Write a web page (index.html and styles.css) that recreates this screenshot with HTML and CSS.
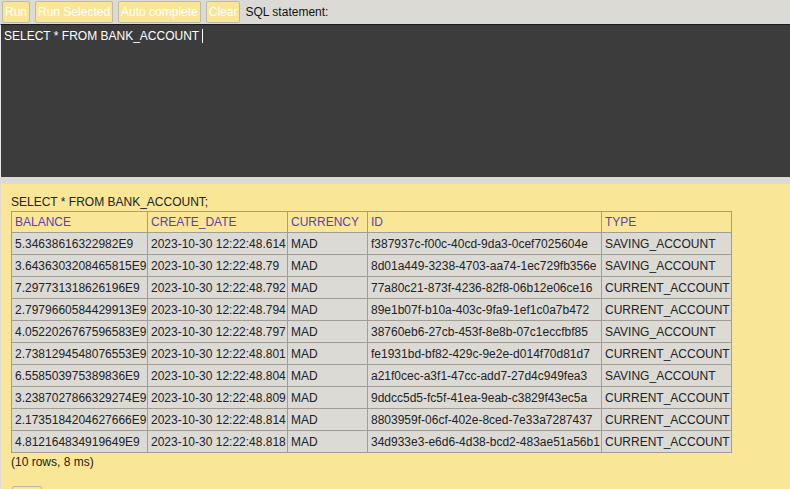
FILE: index.html
```html
<!DOCTYPE html>
<html>
<head>
<meta charset="utf-8">
<link rel="stylesheet" href="styles.css">
</head>
<body>
<div class="toolbar">
  <button class="btn">Run</button>
  <button class="btn">Run Selected</button>
  <button class="btn">Auto complete</button>
  <button class="btn">Clear</button>
  <span class="label">SQL statement:</span>
</div>
<div class="editor"><span class="code">SELECT * FROM BANK_ACCOUNT</span><span class="caret"></span></div>
<div class="gap"></div>
<div class="result">
  <div class="query">SELECT * FROM BANK_ACCOUNT;</div>
  <table class="grid">
    <colgroup><col class="c1"><col class="c2"><col class="c3"><col class="c4"><col class="c5"></colgroup>
    <tr class="head"><th>BALANCE</th><th>CREATE_DATE</th><th>CURRENCY</th><th>ID</th><th>TYPE</th></tr>
    <tr><td>5.34638616322982E9</td><td>2023-10-30 12:22:48.614</td><td>MAD</td><td>f387937c-f00c-40cd-9da3-0cef7025604e</td><td>SAVING_ACCOUNT</td></tr>
    <tr><td>3.6436303208465815E9</td><td>2023-10-30 12:22:48.79</td><td>MAD</td><td>8d01a449-3238-4703-aa74-1ec729fb356e</td><td>SAVING_ACCOUNT</td></tr>
    <tr><td>7.297731318626196E9</td><td>2023-10-30 12:22:48.792</td><td>MAD</td><td>77a80c21-873f-4236-82f8-06b12e06ce16</td><td>CURRENT_ACCOUNT</td></tr>
    <tr><td>2.7979660584429913E9</td><td>2023-10-30 12:22:48.794</td><td>MAD</td><td>89e1b07f-b10a-403c-9fa9-1ef1c0a7b472</td><td>CURRENT_ACCOUNT</td></tr>
    <tr><td>4.0522026767596583E9</td><td>2023-10-30 12:22:48.797</td><td>MAD</td><td>38760eb6-27cb-453f-8e8b-07c1eccfbf85</td><td>SAVING_ACCOUNT</td></tr>
    <tr><td>2.7381294548076553E9</td><td>2023-10-30 12:22:48.801</td><td>MAD</td><td>fe1931bd-bf82-429c-9e2e-d014f70d81d7</td><td>CURRENT_ACCOUNT</td></tr>
    <tr><td>6.558503975389836E9</td><td>2023-10-30 12:22:48.804</td><td>MAD</td><td>a21f0cec-a3f1-47cc-add7-27d4c949fea3</td><td>SAVING_ACCOUNT</td></tr>
    <tr><td>3.2387027866329274E9</td><td>2023-10-30 12:22:48.809</td><td>MAD</td><td>9ddcc5d5-fc5f-41ea-9eab-c3829f43ec5a</td><td>CURRENT_ACCOUNT</td></tr>
    <tr><td>2.1735184204627666E9</td><td>2023-10-30 12:22:48.814</td><td>MAD</td><td>8803959f-06cf-402e-8ced-7e33a7287437</td><td>CURRENT_ACCOUNT</td></tr>
    <tr><td>4.812164834919649E9</td><td>2023-10-30 12:22:48.818</td><td>MAD</td><td>34d933e3-e6d6-4d38-bcd2-483ae51a56b1</td><td>CURRENT_ACCOUNT</td></tr>
  </table>
  <div class="summary">(10 rows, 8 ms)</div>
  <div class="edit-btn"></div>
</div>
</body>
</html>
```

FILE: styles.css
```css
html, body {
  margin: 0;
  padding: 0;
  background: #dcdad5;
  font-family: "Liberation Sans", Arial, sans-serif;
  font-size: 12px;
  overflow: hidden;
  height: 489px;
}
body {
  display: flex;
  flex-direction: column;
}
.toolbar {
  display: flex;
  align-items: center;
  gap: 5px;
  padding: 1px 2px 1px 2px;
  height: 22px;
  flex: none;
}
.btn {
  font-family: "Liberation Sans", Arial, sans-serif;
  font-size: 12px;
  color: #ffffff;
  background: #f8e596;
  border: 1px solid #bdb9ad;
  border-radius: 2px;
  height: 22px;
  padding: 0 2px;
  margin: 0;
}
.label {
  color: #111;
  margin-left: 0;
}
.editor {
  flex: none;
  background: #3c3c3c;
  border-top: 1px solid #1a1a1a;
  border-left: 1px solid #e8e8e8;
  color: #ffffff;
  padding: 4px 3px;
  display: flex;
  align-items: flex-start;
  box-sizing: border-box;
  height: 153px;
}
.code {
  line-height: 14px;
}
.caret {
  display: inline-block;
  width: 1px;
  height: 14px;
  background: #ffffff;
  margin-left: 3px;
}
.gap {
  flex: none;
  height: 7px;
  background: #dcdad5;
}
.result {
  flex: 1;
  min-height: 0;
  overflow: hidden;
  background: #f9e697;
  margin-left: 1px;
  padding: 11px 0 0 10px;
  color: #222;
}
.query {
  line-height: 15px;
  margin-bottom: 1px;
}
.grid {
  border-collapse: collapse;
  table-layout: fixed;
  width: 720px;
  font-size: 12px;
}
.grid th, .grid td {
  border: 1px solid #a19d94;
  padding: 0 2px 0 3px;
  text-align: left;
  font-weight: normal;
  white-space: nowrap;
  overflow: visible;
}
.grid th {
  height: 20px;
  color: #5a3fb8;
  background: #f9e697;
}
.grid td {
  height: 21px;
  background: #dcdad5;
  color: #222;
}
.grid .c1 { width: 136px; }
.grid .c2 { width: 140px; }
.grid .c3 { width: 80px; }
.grid .c4 { width: 234px; }
.grid .c5 { width: 130px; }
.summary {
  margin-top: 1px;
  line-height: 16px;
}
.edit-btn {
  margin-top: 16px;
  margin-left: 1px;
  width: 28px;
  height: 12px;
  border: 1px solid #b8b4a8;
  border-radius: 2px;
  background: #f9e697;
}
```
